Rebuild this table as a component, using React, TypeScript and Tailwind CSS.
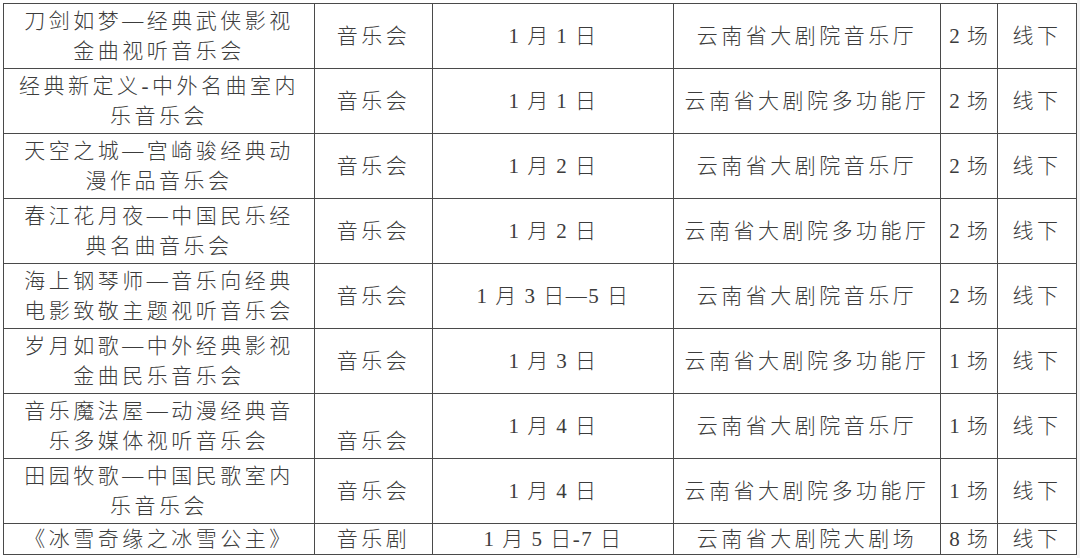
const rows = [
  { title: ['刀剑如梦—经典武侠影视', '金曲视听音乐会'], type: '音乐会', date: '1 月 1 日', venue: '云南省大剧院音乐厅', count: '2 场' },
  { title: ['经典新定义-中外名曲室内', '乐音乐会'], type: '音乐会', date: '1 月 1 日', venue: '云南省大剧院多功能厅', count: '2 场' },
  { title: ['天空之城—宫崎骏经典动', '漫作品音乐会'], type: '音乐会', date: '1 月 2 日', venue: '云南省大剧院音乐厅', count: '2 场' },
  { title: ['春江花月夜—中国民乐经', '典名曲音乐会'], type: '音乐会', date: '1 月 2 日', venue: '云南省大剧院多功能厅', count: '2 场' },
  { title: ['海上钢琴师—音乐向经典', '电影致敬主题视听音乐会'], type: '音乐会', date: '1 月 3 日—5 日', venue: '云南省大剧院音乐厅', count: '2 场' },
  { title: ['岁月如歌—中外经典影视', '金曲民乐音乐会'], type: '音乐会', date: '1 月 3 日', venue: '云南省大剧院多功能厅', count: '1 场' },
  { title: ['音乐魔法屋—动漫经典音', '乐多媒体视听音乐会'], type: '音乐会', date: '1 月 4 日', venue: '云南省大剧院音乐厅', count: '1 场', typeBottom: true },
  { title: ['田园牧歌—中国民歌室内', '乐音乐会'], type: '音乐会', date: '1 月 4 日', venue: '云南省大剧院多功能厅', count: '1 场' },
  { title: ['《冰雪奇缘之冰雪公主》'], type: '音乐剧', date: '1 月 5 日-7 日', venue: '云南省大剧院大剧场', count: '8 场', short: true },
]

const cell = 'border border-[#4a4a4a] text-center px-0.5 whitespace-nowrap'

export default function App() {
  return (
    <div className="relative w-[1080px] h-[558px] bg-white overflow-hidden pt-[3px] pl-[3px] font-['Liberation_Serif','Noto_Sans_CJK_SC',serif] font-light text-[21px] leading-[30px] tracking-[3.5px] text-[#3c3c3c]">
      <table className="border-collapse table-fixed w-[1073px]">
        <colgroup>
          <col className="w-[311px]" />
          <col className="w-[118px]" />
          <col className="w-[241px]" />
          <col className="w-[267px]" />
          <col className="w-[57px]" />
          <col className="w-[79px]" />
        </colgroup>
        <tbody>
          {rows.map((r, i) => (
            <tr key={i} className={r.short ? 'h-[31px]' : 'h-[65px]'}>
              <td className={`${cell} align-middle`}>
                {r.title.map((line, j) => (
                  <div key={j}>{line}</div>
                ))}
              </td>
              <td className={`${cell} ${r.typeBottom ? 'align-bottom pb-[2px]' : 'align-middle'}`}>{r.type}</td>
              <td className={`${cell} align-middle tracking-[1.5px]`}>{r.date}</td>
              <td className={`${cell} align-middle`}>{r.venue}</td>
              <td className={`${cell} align-middle tracking-[1px]`}>{r.count}</td>
              <td className={`${cell} align-middle`}>线下</td>
            </tr>
          ))}
        </tbody>
      </table>
      <div className="absolute right-0 top-0 w-[3px] h-full bg-[#f3f3f3]" />
    </div>
  )
}
